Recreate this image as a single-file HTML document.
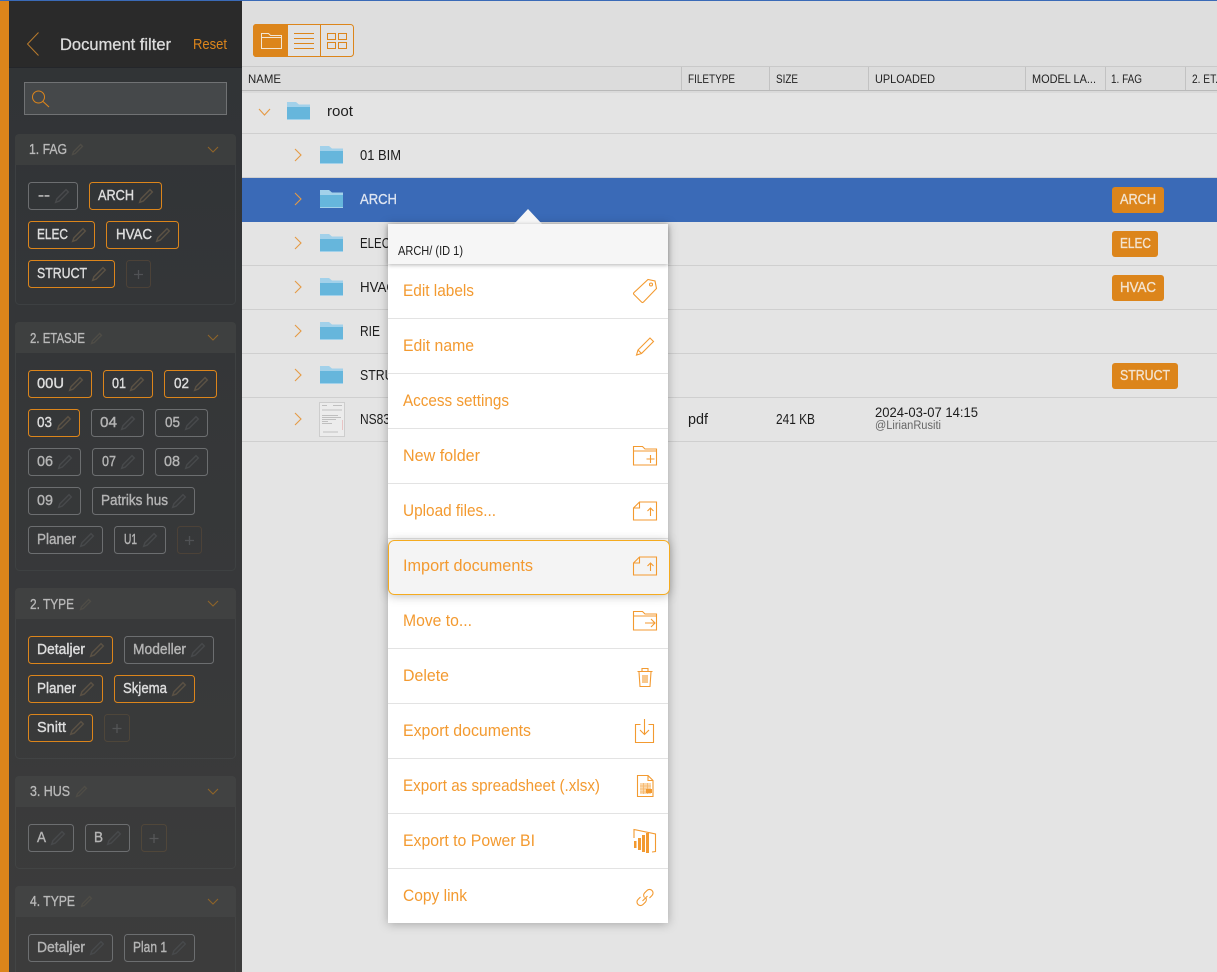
<!DOCTYPE html>
<html><head><meta charset="utf-8"><title>Document filter</title>
<style>
html,body{margin:0;padding:0;background:#e4e4e4;width:1217px;height:972px;overflow:hidden}
svg{display:block}
text{font-family:"Liberation Sans",sans-serif;white-space:pre}
.ch text{font-size:15px;stroke-width:.4px}
.a rect{fill:none;stroke:#dc851b}
.i rect{fill:none;stroke:#6c6e70}
.a text{fill:#dddddd;stroke:#dddddd}
.i text{fill:#b4b4b4;stroke:#b4b4b4}
.t{font-size:15px;fill:#b9b9b9;stroke:#b9b9b9;stroke-width:.35px}
.h{font-size:12px;fill:#222}
.r{font-size:15px;fill:#1d1d1d}
.m{font-size:16.5px;fill:#f39a30}
.tag{font-size:15px;fill:#f3e3cf;stroke:#f3e3cf;stroke-width:.35px}
.ic{fill:none;stroke:#f39a30;stroke-width:1.1}
</style></head><body>
<svg width="1217" height="972" viewBox="0 0 1217 972" xmlns="http://www.w3.org/2000/svg">
<defs>
<linearGradient id="sb" x1="0" y1="0" x2="0" y2="1"><stop offset="0" stop-color="#303336"/><stop offset="1" stop-color="#3c3c3c"/></linearGradient>
<symbol id="pa" viewBox="0 0 14 14" overflow="visible"><path d="M11 .7l2.300 2.300L4.200 12.100.7 13.300l1.200-3.500z" fill="none" stroke="#5a5144" stroke-width="1.500"/></symbol>
<symbol id="pi" viewBox="0 0 14 14" overflow="visible"><path d="M11 .7l2.300 2.300L4.200 12.100.7 13.300l1.200-3.500z" fill="none" stroke="#47494b" stroke-width="1.500"/></symbol>
<symbol id="pt" viewBox="0 0 14 14" overflow="visible"><path d="M11 .7l2.300 2.300L4.200 12.100.7 13.300l1.200-3.500z" fill="none" stroke="#4e4c46" stroke-width="1.800"/></symbol>
<symbol id="fold" viewBox="0 0 23 18"><path d="M0 0h9l3 2.500h11V18H0z" fill="#a2d1ea"/><rect y="5" width="23" height="12" fill="#66b6dc"/></symbol>
<symbol id="chr" viewBox="0 0 8 14" overflow="visible"><path d="M1 1l6 6-6 6" fill="none" stroke="#e59a45" stroke-width="1.100"/></symbol>
<symbol id="chd" viewBox="0 0 12 7" overflow="visible"><path d="M1 1l5 5 5-5" fill="none" stroke="#8f6429" stroke-width="1.100"/></symbol>
</defs>

<rect width="1217" height="972" fill="#e4e4e4"/>
<rect y="1" x="242" width="975" height="65" fill="#dedede"/>
<rect x="0" y="0" width="1217" height="1" fill="#3a6ab7"/>

<!-- sidebar -->
<rect x="9" y="1" width="233" height="971" fill="url(#sb)"/>
<rect x="0" y="1" width="9" height="971" fill="#dc851b"/>
<rect x="9" y="1" width="233" height="66" fill="#2a2a2a"/>
<rect x="9" y="67" width="233" height="1" fill="#24262a"/>
<path d="M38.500 32.500L27.500 44l11 11.500" fill="none" stroke="#b87a2c" stroke-width="1"/>
<text x="60" y="50" font-size="17" fill="#dcdcdc" stroke="#dcdcdc" stroke-width=".3" textLength="111" lengthAdjust="spacingAndGlyphs">Document filter</text>
<text x="193" y="49" font-size="15" fill="#dc851b" textLength="34" lengthAdjust="spacingAndGlyphs">Reset</text>
<rect x="24.500" y="82.500" width="202" height="32" fill="#45484a" stroke="#707274"/>
<circle cx="38.500" cy="97" r="6" fill="none" stroke="#dc851b" stroke-width="1"/>
<path d="M43 101.500l6 5.500" stroke="#dc851b" stroke-width="1.100"/>

<!-- panel 1 -->
<g>
<rect x="15.500" y="134.500" width="220" height="170" rx="4" fill="none" stroke="#3d4042"/>
<path d="M15 138a4 4 0 0 1 4-4h213a4 4 0 0 1 4 4v27H15z" fill="#3c3e3e"/>
<text class="t" x="29" y="154" textLength="38" lengthAdjust="spacingAndGlyphs">1. FAG</text>
<use href="#pt" x="72" y="144" width="11" height="11"/>
<use href="#chd" x="207" y="146" width="12" height="7"/>
</g>
<g class="ch">
<g class="i" transform="translate(28,182)"><rect x=".5" y=".5" width="49" height="27" rx="3"/><text x="10" y="18" textLength="12" lengthAdjust="spacingAndGlyphs">--</text><use href="#pi" x="27" y="7" width="14" height="14"/></g>
<g class="a" transform="translate(89,182)"><rect x=".5" y=".5" width="72" height="27" rx="3"/><text x="9" y="18" textLength="36" lengthAdjust="spacingAndGlyphs">ARCH</text><use href="#pa" x="50" y="7" width="14" height="14"/></g>
<g class="a" transform="translate(28,221)"><rect x=".5" y=".5" width="66" height="27" rx="3"/><text x="9" y="18" textLength="31" lengthAdjust="spacingAndGlyphs">ELEC</text><use href="#pa" x="44" y="7" width="14" height="14"/></g>
<g class="a" transform="translate(106,221)"><rect x=".5" y=".5" width="72" height="27" rx="3"/><text x="10" y="18" textLength="36" lengthAdjust="spacingAndGlyphs">HVAC</text><use href="#pa" x="50" y="7" width="14" height="14"/></g>
<g class="a" transform="translate(28,260)"><rect x=".5" y=".5" width="86" height="27" rx="3"/><text x="9" y="18" textLength="50" lengthAdjust="spacingAndGlyphs">STRUCT</text><use href="#pa" x="64" y="7" width="14" height="14"/></g>
</g>
<rect x="126.500" y="260.500" width="24" height="27" rx="3" fill="none" stroke="#4c4238"/>
<path d="M138.500 270v9M134 274.500h9" stroke="#505255" stroke-width="1.300"/>

<!-- panel 2 -->
<g>
<rect x="15.500" y="322.500" width="220" height="248" rx="4" fill="none" stroke="#3e4142"/>
<path d="M15 326a4 4 0 0 1 4-4h213a4 4 0 0 1 4 4v27H15z" fill="#3e4040"/>
<text class="t" x="30" y="343" textLength="55" lengthAdjust="spacingAndGlyphs">2. ETASJE</text>
<use href="#pt" x="91" y="333" width="11" height="11"/>
<use href="#chd" x="207" y="334" width="12" height="7"/>
</g>
<g class="ch">
<g class="a" transform="translate(28,370)"><rect x=".5" y=".5" width="63" height="27" rx="3"/><text x="9" y="18" textLength="27" lengthAdjust="spacingAndGlyphs">00U</text><use href="#pa" x="41" y="7" width="14" height="14"/></g>
<g class="a" transform="translate(103,370)"><rect x=".5" y=".5" width="49" height="27" rx="3"/><text x="9" y="18" textLength="14" lengthAdjust="spacingAndGlyphs">01</text><use href="#pa" x="27" y="7" width="14" height="14"/></g>
<g class="a" transform="translate(164,370)"><rect x=".5" y=".5" width="52" height="27" rx="3"/><text x="10" y="18" textLength="15" lengthAdjust="spacingAndGlyphs">02</text><use href="#pa" x="30" y="7" width="14" height="14"/></g>
<g class="a" transform="translate(28,409)"><rect x=".5" y=".5" width="51" height="27" rx="3"/><text x="9" y="18" textLength="15" lengthAdjust="spacingAndGlyphs">03</text><use href="#pa" x="29" y="7" width="14" height="14"/></g>
<g class="i" transform="translate(91,409)"><rect x=".5" y=".5" width="52" height="27" rx="3"/><text x="9" y="18" textLength="17" lengthAdjust="spacingAndGlyphs">04</text><use href="#pi" x="30" y="7" width="14" height="14"/></g>
<g class="i" transform="translate(155,409)"><rect x=".5" y=".5" width="52" height="27" rx="3"/><text x="10" y="18" textLength="15" lengthAdjust="spacingAndGlyphs">05</text><use href="#pi" x="30" y="7" width="14" height="14"/></g>
<g class="i" transform="translate(28,448)"><rect x=".5" y=".5" width="52" height="27" rx="3"/><text x="9" y="18" textLength="16" lengthAdjust="spacingAndGlyphs">06</text><use href="#pi" x="30" y="7" width="14" height="14"/></g>
<g class="i" transform="translate(92,448)"><rect x=".5" y=".5" width="51" height="27" rx="3"/><text x="10" y="18" textLength="14" lengthAdjust="spacingAndGlyphs">07</text><use href="#pi" x="29" y="7" width="14" height="14"/></g>
<g class="i" transform="translate(155,448)"><rect x=".5" y=".5" width="52" height="27" rx="3"/><text x="9" y="18" textLength="16" lengthAdjust="spacingAndGlyphs">08</text><use href="#pi" x="30" y="7" width="14" height="14"/></g>
<g class="i" transform="translate(28,487)"><rect x=".5" y=".5" width="52" height="27" rx="3"/><text x="9" y="18" textLength="16" lengthAdjust="spacingAndGlyphs">09</text><use href="#pi" x="30" y="7" width="14" height="14"/></g>
<g class="i" transform="translate(92,487)"><rect x=".5" y=".5" width="102" height="27" rx="3"/><text x="9" y="18" textLength="67" lengthAdjust="spacingAndGlyphs">Patriks hus</text><use href="#pi" x="80" y="7" width="14" height="14"/></g>
<g class="i" transform="translate(28,526)"><rect x=".5" y=".5" width="74" height="27" rx="3"/><text x="9" y="18" textLength="39" lengthAdjust="spacingAndGlyphs">Planer</text><use href="#pi" x="52" y="7" width="14" height="14"/></g>
<g class="i" transform="translate(114,526)"><rect x=".5" y=".5" width="51" height="27" rx="3"/><text x="10" y="18" textLength="13" lengthAdjust="spacingAndGlyphs">U1</text><use href="#pi" x="29" y="7" width="14" height="14"/></g>
</g>
<rect x="177.500" y="526.500" width="24" height="27" rx="3" fill="none" stroke="#4c4238"/>
<path d="M189.500 536v9M185 540.500h9" stroke="#505255" stroke-width="1.300"/>

<!-- panel 3 -->
<g>
<rect x="15.500" y="588.500" width="220" height="170" rx="4" fill="none" stroke="#414344"/>
<path d="M15 592a4 4 0 0 1 4-4h213a4 4 0 0 1 4 4v27H15z" fill="#404141"/>
<text class="t" x="30" y="609" textLength="44" lengthAdjust="spacingAndGlyphs">2. TYPE</text>
<use href="#pt" x="80" y="599" width="11" height="11"/>
<use href="#chd" x="207" y="600" width="12" height="7"/>
</g>
<g class="ch">
<g class="a" transform="translate(28,636)"><rect x=".5" y=".5" width="84" height="27" rx="3"/><text x="9" y="18" textLength="48" lengthAdjust="spacingAndGlyphs">Detaljer</text><use href="#pa" x="62" y="7" width="14" height="14"/></g>
<g class="i" transform="translate(124,636)"><rect x=".5" y=".5" width="89" height="27" rx="3"/><text x="9" y="18" textLength="53" lengthAdjust="spacingAndGlyphs">Modeller</text><use href="#pi" x="67" y="7" width="14" height="14"/></g>
<g class="a" transform="translate(28,675)"><rect x=".5" y=".5" width="74" height="27" rx="3"/><text x="9" y="18" textLength="39" lengthAdjust="spacingAndGlyphs">Planer</text><use href="#pa" x="52" y="7" width="14" height="14"/></g>
<g class="a" transform="translate(114,675)"><rect x=".5" y=".5" width="80" height="27" rx="3"/><text x="9" y="18" textLength="44" lengthAdjust="spacingAndGlyphs">Skjema</text><use href="#pa" x="58" y="7" width="14" height="14"/></g>
<g class="a" transform="translate(28,714)"><rect x=".5" y=".5" width="64" height="27" rx="3"/><text x="9" y="18" textLength="29" lengthAdjust="spacingAndGlyphs">Snitt</text><use href="#pa" x="42" y="7" width="14" height="14"/></g>
</g>
<rect x="104.500" y="714.500" width="25" height="27" rx="3" fill="none" stroke="#4e463a"/>
<path d="M117 724v9M112.500 728.500h9" stroke="#535556" stroke-width="1.300"/>

<!-- panel 4 -->
<g>
<rect x="15.500" y="776.500" width="220" height="92" rx="4" fill="none" stroke="#424444"/>
<path d="M15 780a4 4 0 0 1 4-4h213a4 4 0 0 1 4 4v27H15z" fill="#414242"/>
<text class="t" x="30" y="796" textLength="40" lengthAdjust="spacingAndGlyphs">3. HUS</text>
<use href="#pt" x="76" y="786" width="11" height="11"/>
<use href="#chd" x="207" y="788" width="12" height="7"/>
</g>
<g class="ch">
<g class="i" transform="translate(28,824)"><rect x=".5" y=".5" width="45" height="27" rx="3"/><text x="9" y="18" textLength="9" lengthAdjust="spacingAndGlyphs">A</text><use href="#pi" x="23" y="7" width="14" height="14"/></g>
<g class="i" transform="translate(85,824)"><rect x=".5" y=".5" width="44" height="27" rx="3"/><text x="9" y="18" textLength="9" lengthAdjust="spacingAndGlyphs">B</text><use href="#pi" x="22" y="7" width="14" height="14"/></g>
</g>
<rect x="141.500" y="824.500" width="25" height="27" rx="3" fill="none" stroke="#50473a"/>
<path d="M154 834v9M149.500 838.500h9" stroke="#565758" stroke-width="1.300"/>

<!-- panel 5 -->
<g>
<rect x="15.500" y="886.500" width="220" height="100" rx="4" fill="none" stroke="#434545"/>
<path d="M15 890a4 4 0 0 1 4-4h213a4 4 0 0 1 4 4v27H15z" fill="#424343"/>
<text class="t" x="30" y="906" textLength="45" lengthAdjust="spacingAndGlyphs">4. TYPE</text>
<use href="#pt" x="81" y="896" width="11" height="11"/>
<use href="#chd" x="207" y="898" width="12" height="7"/>
</g>
<g class="ch">
<g class="i" transform="translate(28,934)"><rect x=".5" y=".5" width="84" height="27" rx="3"/><text x="9" y="18" textLength="48" lengthAdjust="spacingAndGlyphs">Detaljer</text><use href="#pi" x="62" y="7" width="14" height="14"/></g>
<g class="i" transform="translate(124,934)"><rect x=".5" y=".5" width="70" height="27" rx="3"/><text x="9" y="18" textLength="34" lengthAdjust="spacingAndGlyphs">Plan 1</text><use href="#pi" x="48" y="7" width="14" height="14"/></g>
</g>

<!-- toolbar -->
<rect x="253.500" y="24.500" width="100" height="32" rx="3" fill="#e2e2e2" stroke="#dc851b"/>
<path d="M288 24h-32a3 3 0 0 0-3 3v27a3 3 0 0 0 3 3h32z" fill="#dc851b"/>
<path d="M320.500 25v31" stroke="#dc851b"/>
<path d="M261.500 48.500v-15h7l2 2h11v13zM261.500 37.500h20" fill="none" stroke="#f3e6d4"/>
<path d="M294 33.500h20M294 38.500h20M294 43.500h20M294 48.500h20" stroke="#dc851b"/>
<path d="M327.500 33.500h8v6h-8zM338.500 33.500h8v6h-8zM327.500 42.500h8v6h-8zM338.500 42.500h8v6h-8z" fill="none" stroke="#dc851b"/>

<!-- table header -->
<rect x="242" y="66" width="975" height="24" fill="#dcdcdc"/>
<rect x="242" y="66" width="975" height="1" fill="#c9c9c9"/>
<rect x="242" y="90" width="975" height="1" fill="#b9b9b9"/>
<rect x="242" y="91" width="975" height="2" fill="#dadada"/>
<path d="M681.500 67v23M769.500 67v23M868.500 67v23M1025.500 67v23M1105.500 67v23M1185.500 67v23" stroke="#c2c2c2"/>
<text class="h" x="248" y="83" textLength="33" lengthAdjust="spacingAndGlyphs">NAME</text>
<text class="h" x="688" y="83" textLength="47" lengthAdjust="spacingAndGlyphs">FILETYPE</text>
<text class="h" x="776" y="83" textLength="22" lengthAdjust="spacingAndGlyphs">SIZE</text>
<text class="h" x="875" y="83" textLength="60" lengthAdjust="spacingAndGlyphs">UPLOADED</text>
<text class="h" x="1032" y="83" textLength="64" lengthAdjust="spacingAndGlyphs">MODEL LA...</text>
<text class="h" x="1111" y="83" textLength="31" lengthAdjust="spacingAndGlyphs">1. FAG</text>
<text class="h" x="1192" y="83" textLength="26" lengthAdjust="spacingAndGlyphs">2. ET.</text>

<!-- rows -->
<path d="M242 133.500h975M242 177.500h975M242 265.500h975M242 309.500h975M242 353.500h975M242 397.500h975M242 441.500h975" stroke="#cfcfcf"/>
<rect x="242" y="178" width="975" height="44" fill="#3a6ab7"/>
<path d="M259 109l5.500 6 5.500-6" fill="none" stroke="#e59a45" stroke-width="1.100"/>
<use href="#fold" x="287" y="102" width="23" height="18"/>
<text class="r" x="327" y="116" textLength="26" lengthAdjust="spacingAndGlyphs">root</text>

<use href="#chr" x="294" y="148" width="8" height="14"/>
<use href="#fold" x="320" y="146" width="23" height="18"/>
<text class="r" x="360" y="160" textLength="41" lengthAdjust="spacingAndGlyphs">01 BIM</text>

<use href="#chr" x="294" y="192" width="8" height="14"/>
<use href="#fold" x="320" y="190" width="23" height="18"/>
<text x="360" y="204" font-size="15" fill="#dfe6f2" stroke="#dfe6f2" stroke-width=".3" textLength="37" lengthAdjust="spacingAndGlyphs">ARCH</text>

<use href="#chr" x="294" y="236" width="8" height="14"/>
<use href="#fold" x="320" y="234" width="23" height="18"/>
<text class="r" x="360" y="248" textLength="30" lengthAdjust="spacingAndGlyphs">ELEC</text>

<use href="#chr" x="294" y="280" width="8" height="14"/>
<use href="#fold" x="320" y="278" width="23" height="18"/>
<text class="r" x="360" y="292" textLength="36" lengthAdjust="spacingAndGlyphs">HVAC</text>

<use href="#chr" x="294" y="324" width="8" height="14"/>
<use href="#fold" x="320" y="322" width="23" height="18"/>
<text class="r" x="360" y="336" textLength="20" lengthAdjust="spacingAndGlyphs">RIE</text>

<use href="#chr" x="294" y="368" width="8" height="14"/>
<use href="#fold" x="320" y="366" width="23" height="18"/>
<text class="r" x="360" y="380" textLength="50" lengthAdjust="spacingAndGlyphs">STRUCT</text>

<use href="#chr" x="294" y="412" width="8" height="14"/>
<rect x="319.500" y="402.500" width="25" height="34" fill="#ececec" stroke="#cdcdcd"/>
<path d="M322 405.500h5M333 405.500h9M322 410h20M322 415.500h16M322 417.500h19M322 419.500h14M322 421.500h6M322 423.500h10M323 432h15" stroke="#b0b0b0" stroke-width=".7"/>
<path d="M342.500 420v10" stroke="#e8c4c4"/>
<text class="r" x="360" y="424" textLength="30" lengthAdjust="spacingAndGlyphs">NS83</text>

<text class="r" x="688" y="424" textLength="20" lengthAdjust="spacingAndGlyphs">pdf</text>
<text class="r" x="776" y="424" textLength="39" lengthAdjust="spacingAndGlyphs">241 KB</text>
<text x="875" y="417" font-size="14" fill="#1d1d1d" textLength="103" lengthAdjust="spacingAndGlyphs">2024-03-07 14:15</text>
<text x="875" y="429" font-size="11.5" fill="#666" textLength="66" lengthAdjust="spacingAndGlyphs">@LirianRusiti</text>

<!-- tags -->
<rect x="1112" y="187" width="52" height="26" rx="3" fill="#dc851b"/><text class="tag" x="1120" y="204" textLength="36" lengthAdjust="spacingAndGlyphs">ARCH</text>
<rect x="1112" y="231" width="46" height="26" rx="3" fill="#dc851b"/><text class="tag" x="1120" y="248" textLength="31" lengthAdjust="spacingAndGlyphs">ELEC</text>
<rect x="1112" y="275" width="52" height="26" rx="3" fill="#dc851b"/><text class="tag" x="1120" y="292" textLength="36" lengthAdjust="spacingAndGlyphs">HVAC</text>
<rect x="1112" y="363" width="66" height="26" rx="3" fill="#dc851b"/><text class="tag" x="1120" y="380" textLength="50" lengthAdjust="spacingAndGlyphs">STRUCT</text>

<!-- menu -->
<rect x="388" y="224" width="280" height="699" fill="#fff" style="filter:drop-shadow(0 1px 5px rgba(0,0,0,.28))"/>
<path d="M514 224l14-15 14 15z" fill="#f6f6f6"/>
<rect x="388" y="224" width="280" height="40" fill="#f6f6f6" style="filter:drop-shadow(0 1px 2px rgba(0,0,0,.3))"/>
<text x="398" y="255" font-size="12.5" fill="#1d1d1d" textLength="65" lengthAdjust="spacingAndGlyphs">ARCH/ (ID 1)</text>
<path d="M388 318.500h280M388 373.500h280M388 428.500h280M388 483.500h280M388 538.500h280M388 648.500h280M388 703.500h280M388 758.500h280M388 813.500h280M388 868.500h280" stroke="#e3e3e3"/>
<rect x="388.500" y="540.500" width="281" height="54" rx="6" fill="#f4f4f4" stroke="#f5ab1f" style="filter:drop-shadow(0 1px 5px rgba(0,0,0,.25))"/>

<text class="m" x="403" y="296" textLength="71" lengthAdjust="spacingAndGlyphs">Edit labels</text>
<text class="m" x="403" y="351" textLength="71" lengthAdjust="spacingAndGlyphs">Edit name</text>
<text class="m" x="403" y="406" textLength="106" lengthAdjust="spacingAndGlyphs">Access settings</text>
<text class="m" x="403" y="461" textLength="77" lengthAdjust="spacingAndGlyphs">New folder</text>
<text class="m" x="403" y="516" textLength="93" lengthAdjust="spacingAndGlyphs">Upload files...</text>
<text class="m" x="403" y="571" textLength="130" lengthAdjust="spacingAndGlyphs">Import documents</text>
<text class="m" x="403" y="626" textLength="69" lengthAdjust="spacingAndGlyphs">Move to...</text>
<text class="m" x="403" y="681" textLength="46" lengthAdjust="spacingAndGlyphs">Delete</text>
<text class="m" x="403" y="736" textLength="128" lengthAdjust="spacingAndGlyphs">Export documents</text>
<text class="m" x="403" y="791" textLength="197" lengthAdjust="spacingAndGlyphs">Export as spreadsheet (.xlsx)</text>
<text class="m" x="403" y="846" textLength="132" lengthAdjust="spacingAndGlyphs">Export to Power BI</text>
<text class="m" x="403" y="901" textLength="64" lengthAdjust="spacingAndGlyphs">Copy link</text>

<!-- menu icons -->
<rect x="640" y="783" width="11" height="11" fill="#fbd9ae"/>
<g class="ic">
<path d="M634 292.500L648 279.500l7 1.500 1.500 7.500L643.500 302q-1 1-2 0l-7.500-7.500q-1-1 0-2z"/><circle cx="651" cy="284.500" r="1.500"/>
<path d="M636.500 355l1.500-5 12-12 3.500 3.500-12 12zM638 350l3.500 3.500"/>
<path d="M633.500 465v-18.500h9l2.500 2.500h11.500v16zM633.500 451h23M650.500 455v8M646.500 459h8"/>
<path d="M633.500 520v-12l6-6h17v18zM639.500 502v6h-6M650.500 508v8M647.500 511l3-3 3 3"/>
<path d="M633.500 575v-12l6-6h17v18zM639.500 557v6h-6M650.500 563v8M647.500 566l3-3 3 3"/>
<path d="M633.500 630v-18.500h9l2.500 2.500h11.500v16zM633.500 616h23M645 623h10M651 619l4 4-4 4"/>
<path d="M637.500 671.500h15M642 671v-2.500h6v2.500M639 672l1 14.500h10l1-14.500M643 675v8M645 675v8M647 675v8"/>
<path d="M640.500 724.500h-5v18h18v-18h-5M644.500 719v15M640 730l4.500 4.500 4.500-4.500"/>
<path d="M637.500 775.500h10.500l5 5v16h-15.500zM648 775.500v5h5"/>
<path d="M634 838v-8.500l21.500 4.500v17.500l-3.500 .5"/>
<path d="M642.500 901l5-5M640.500 897l-2.500 2.500a3.500 3.500 0 0 0 5 5l2.500-2.500a3.500 3.500 0 0 0 0-4.500M649.500 898l2.500-2.500a3.500 3.500 0 0 0-5-5l-2.500 2.500a3.500 3.500 0 0 0 0 4.500"/>
</g>
<path d="M640 786h11M640 789h11M640 792h11M643.500 783v11M647.500 783v11" stroke="#f6b56a" stroke-width=".8"/>
<rect x="646" y="789" width="6" height="4" fill="#f39a30"/>
<rect x="634" y="841" width="2.500" height="7" fill="#f39a30"/>
<rect x="638" y="838" width="3" height="12" fill="#f39a30"/>
<rect x="642" y="835" width="3" height="17" fill="#f39a30"/>
<rect x="646" y="833" width="3" height="20" fill="#f39a30"/>
</svg>
</body></html>
